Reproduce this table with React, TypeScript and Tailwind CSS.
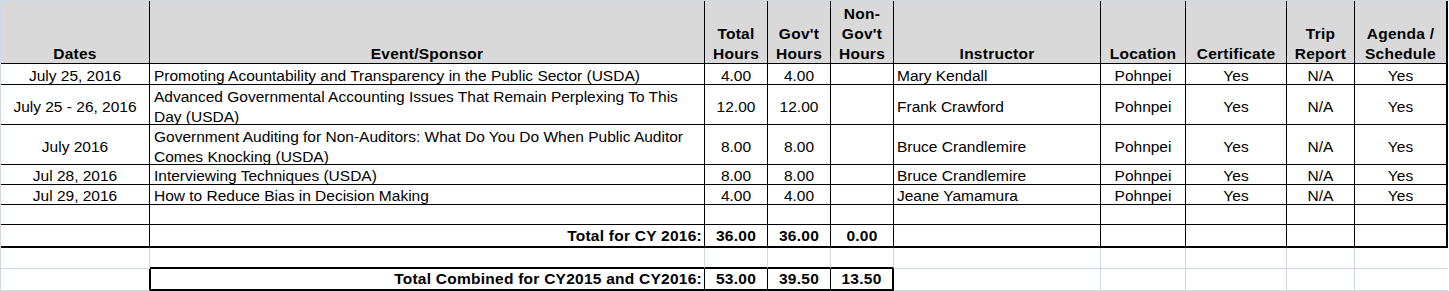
import React from "react";

type Row = {
  date: string;
  ev: string[];
  t: string;
  g: string;
  inst: string;
  tall: boolean;
};

const rows: Row[] = [
  { date: "July 25, 2016", ev: ["Promoting Acountability and Transparency in the Public Sector (USDA)"], t: "4.00", g: "4.00", inst: "Mary Kendall", tall: false },
  { date: "July 25 - 26, 2016", ev: ["Advanced Governmental Accounting Issues That Remain Perplexing To This", "Day (USDA)"], t: "12.00", g: "12.00", inst: "Frank Crawford", tall: true },
  { date: "July 2016", ev: ["Government Auditing for Non-Auditors: What Do You Do When Public Auditor", "Comes Knocking (USDA)"], t: "8.00", g: "8.00", inst: "Bruce Crandlemire", tall: true },
  { date: "Jul 28, 2016", ev: ["Interviewing Techniques (USDA)"], t: "8.00", g: "8.00", inst: "Bruce Crandlemire", tall: false },
  { date: "Jul 29, 2016", ev: ["How to Reduce Bias in Decision Making"], t: "4.00", g: "4.00", inst: "Jeane Yamamura", tall: false },
];

function C({ className = "", children }: { className?: string; children?: React.ReactNode }) {
  return <div className={"flex min-w-0 whitespace-nowrap " + className}>{children}</div>;
}

function H({ children, last = false }: { children: React.ReactNode; last?: boolean }) {
  return (
    <div
      className={
        "flex items-end justify-center bg-[#d9d9d9] border-b border-black text-center font-bold tracking-[0.25px] leading-[20px] " +
        (last ? "border-r-2" : "border-r")
      }
    >
      <div className="translate-y-[1px]">{children}</div>
    </div>
  );
}

export default function App() {
  const dataB = "border-b border-r border-black leading-[17px]";
  const boldNum = "border-b-2 border-r border-black justify-center items-end pb-[2px] font-bold tracking-[0.25px] leading-[17px]";
  return (
    <div
      className="w-[1449px] h-[291px] overflow-hidden bg-white border-t border-l border-[#d0d7e5] text-[15.5px] text-black"
      style={{ fontFamily: '"Liberation Sans", Arial, sans-serif' }}
    >
      <div className="grid grid-cols-[149px_555px_63px_63px_63px_207px_85px_101px_68px_93px] grid-rows-[63px_21px_40px_40px_20px_20px_20px_23px_21px_22px]">
        {/* Header */}
        <H>Dates</H>
        <H>Event/Sponsor</H>
        <H>Total<br />Hours</H>
        <H>Gov't<br />Hours</H>
        <H>Non-<br />Gov't<br />Hours</H>
        <H>Instructor</H>
        <H>Location</H>
        <H>Certificate</H>
        <H>Trip<br />Report</H>
        <H last>Agenda /<br />Schedule</H>

        {/* Data rows */}
        {rows.map((r, i) => {
          const v = r.tall ? "items-center pt-[4px]" : "items-end";
          return (
            <React.Fragment key={i}>
              <C className={dataB + " justify-center " + v}>{r.date}</C>
              <C className={dataB + " justify-start pl-[4px] " + v}>
                {r.ev.length > 1 ? (
                  <div className="leading-[20px]">
                    {r.ev[0]}
                    <br />
                    {r.ev[1]}
                  </div>
                ) : (
                  r.ev[0]
                )}
              </C>
              <C className={dataB + " justify-center " + v}>{r.t}</C>
              <C className={dataB + " justify-center " + v}>{r.g}</C>
              <C className={dataB + " justify-center " + v}></C>
              <C className={dataB + " justify-start pl-[3px] " + v}>{r.inst}</C>
              <C className={dataB + " justify-center " + v}>Pohnpei</C>
              <C className={dataB + " justify-center " + v}>Yes</C>
              <C className={dataB + " justify-center " + v}>N/A</C>
              <C className={"border-b border-r-2 border-black leading-[17px] justify-center " + v}>Yes</C>
            </React.Fragment>
          );
        })}

        {/* Empty row */}
        <C className={dataB} />
        <C className={dataB} />
        <C className={dataB} />
        <C className={dataB} />
        <C className={dataB} />
        <C className={dataB} />
        <C className={dataB} />
        <C className={dataB} />
        <C className={dataB} />
        <C className="border-b border-r-2 border-black" />

        {/* Total for CY 2016 */}
        <C className="border-b-2 border-r border-black" />
        <C className="border-b-2 border-r border-black justify-end items-end pr-[2px] pb-[2px] font-bold tracking-[0.25px] leading-[17px]">Total for CY 2016:</C>
        <C className={boldNum}>36.00</C>
        <C className={boldNum}>36.00</C>
        <C className={boldNum}>0.00</C>
        <C className="border-b-2 border-r border-black" />
        <C className="border-b-2 border-r border-black" />
        <C className="border-b-2 border-r border-black" />
        <C className="border-b-2 border-r border-black" />
        <C className="border-b-2 border-r-2 border-black" />

        {/* Blank row */}
        <C className="border-b border-r border-[#d0d7e5]" />
        <C className="border-b-2 border-b-black border-r border-r-[#d0d7e5]" />
        <C className="border-b-2 border-b-black border-r border-r-[#d0d7e5]" />
        <C className="border-b-2 border-b-black border-r border-r-[#d0d7e5]" />
        <C className="border-b-2 border-b-black border-r border-r-[#d0d7e5]" />
        <C className="border-b border-r border-[#d0d7e5]" />
        <C className="border-b border-r border-[#d0d7e5]" />
        <C className="border-b border-r border-[#d0d7e5]" />
        <C className="border-b border-r border-[#d0d7e5]" />
        <C className="border-b border-[#d0d7e5]" />

        {/* Total Combined */}
        <C className="border-b border-b-[#d0d7e5] border-r border-r-black" />
        <C className="border-l border-b-2 border-r border-black justify-end items-end pr-[2px] pb-[2px] font-bold tracking-[0.25px] leading-[17px]">Total Combined for CY2015 and CY2016:</C>
        <C className={boldNum}>53.00</C>
        <C className={boldNum}>39.50</C>
        <C className="border-b-2 border-r-2 border-black justify-center items-end pb-[2px] font-bold tracking-[0.25px] leading-[17px]">13.50</C>
        <C className="border-b border-r border-[#d0d7e5]" />
        <C className="border-b border-r border-[#d0d7e5]" />
        <C className="border-b border-r border-[#d0d7e5]" />
        <C className="border-b border-r border-[#d0d7e5]" />
        <C className="border-b border-[#d0d7e5]" />
      </div>
    </div>
  );
}
